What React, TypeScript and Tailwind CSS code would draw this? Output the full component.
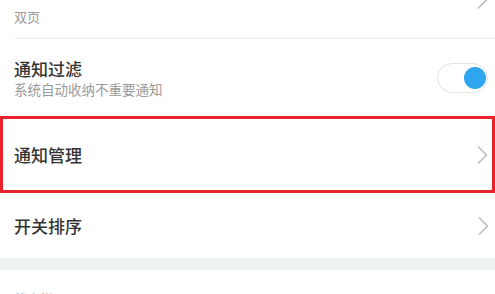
import React from 'react';

function Chevron() {
  return (
    <svg width="11" height="18" viewBox="0 0 11 18" fill="none" className="shrink-0">
      <polyline points="1.5,1 9.5,9 1.5,17" stroke="#bdbdbd" strokeWidth="1.6" strokeLinecap="round" strokeLinejoin="round" />
    </svg>
  );
}

function Toggle({ on }: { on: boolean }) {
  return (
    <div className="w-[51px] h-[30px] rounded-full border border-[#e3e3e3] bg-white flex items-center justify-end pr-[1px]">
      {on && <div className="w-[22px] h-[22px] rounded-full bg-[#2fa6ef]" />}
    </div>
  );
}

export default function App() {
  return (
    <div
      className="w-[495px] h-[294px] overflow-hidden bg-white"
      style={{ fontFamily: '"Noto Sans CJK SC", "Noto Sans", sans-serif' }}
    >
      {/* row whose title sits above the top edge */}
      <div className="-mt-[39px] h-[77px] flex items-center pl-[14px] pr-[7px]">
        <div className="flex-1 self-start pt-[42px]">
          <span className="text-[13px] leading-[18px] text-[#9a9a9a]">双页</span>
        </div>
        <Chevron />
      </div>
      <div className="ml-[14px] h-px bg-[#ededed]" />

      <div className="h-[77px] flex items-center pl-[14px] pr-[7px]">
        <div className="flex-1 flex flex-col">
          <span className="text-[17px] leading-[22px] font-medium text-[#333]">通知过滤</span>
          <span className="text-[13.5px] leading-[18px] text-[#9a9a9a]">系统自动收纳不重要通知</span>
        </div>
        <Toggle on />
      </div>

      <div className="h-[77px] border-[3px] border-[#e8232b] flex items-center pl-[11px] pr-[4px]">
        <span className="flex-1 text-[17px] leading-[22px] font-medium text-[#333]">通知管理</span>
        <Chevron />
      </div>

      <div className="h-[65px] flex items-center pl-[14px] pr-[6px]">
        <span className="flex-1 text-[17px] leading-[22px] font-medium text-[#333]">开关排序</span>
        <Chevron />
      </div>

      <div className="h-[12px] bg-[#eff4f3]" />

      <div className="pl-[14px] pt-[15px]">
        <span className="text-[13px] leading-[18px] text-[#9a9a9a]">状态栏</span>
      </div>
    </div>
  );
}
